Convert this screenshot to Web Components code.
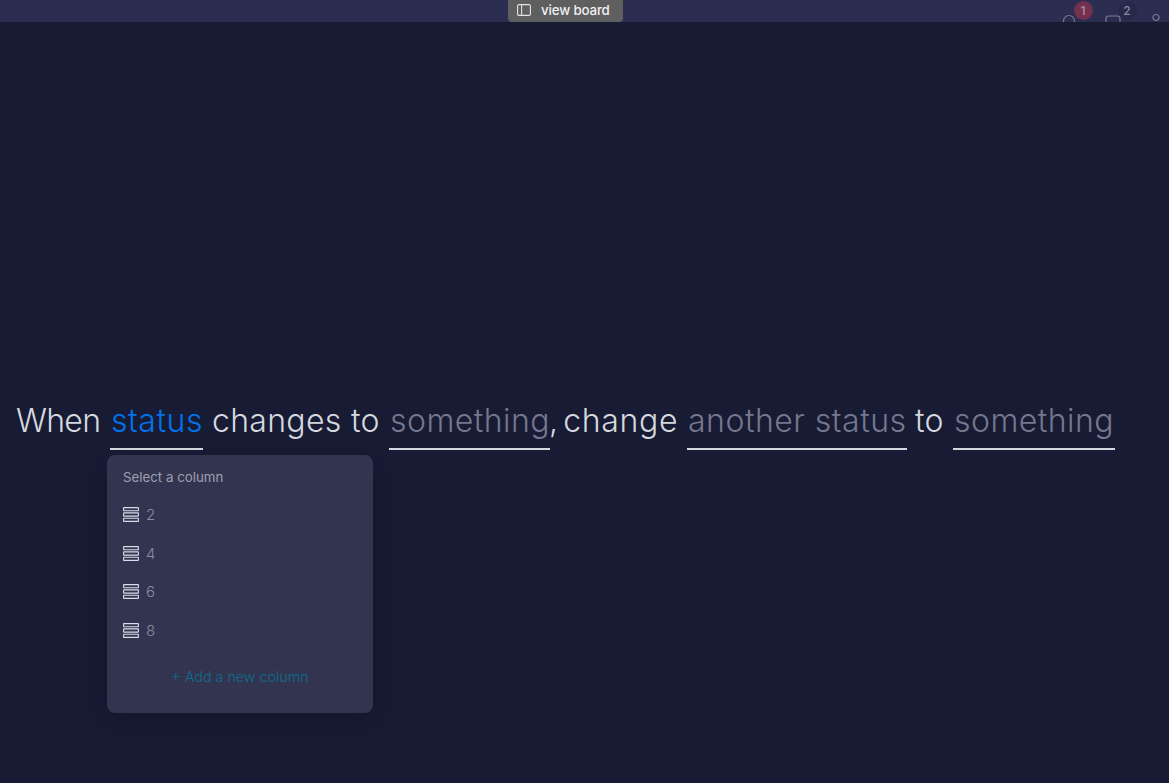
<!DOCTYPE html>
<html>
<head>
<meta charset="utf-8">
<title>Automation</title>
<style>
  html, body { margin: 0; height: 100%; background: #181b34; overflow: hidden; }
  body { font-family: "Inter", "Liberation Sans", sans-serif; display: flex; flex-direction: column; }
</style>
</head>
<body>
<top-bar>
  <bar-icon kind="bell" count="1" tone="#74304f" ink="#b08c9f"></bar-icon>
  <bar-icon kind="inbox" count="2" tone="#26294a" ink="#83869f"></bar-icon>
  <bar-icon kind="person"></bar-icon>
</top-bar>
<rule-sentence>
  <rule-word style="--w:85px;--ls:-.7px;margin-left:-1px">When</rule-word>
  <rule-slot style="--w:93px;--ls:.55px" tone="#0073ea" open>status
    <column-menu slot="menu" heading="Select a column" action="+ Add a new column">
      <column-item>2</column-item>
      <column-item>4</column-item>
      <column-item>6</column-item>
      <column-item>8</column-item>
    </column-menu>
  </rule-slot>
  <rule-word style="--w:168px;--ls:.3px">changes to</rule-word>
  <rule-slot style="--w:161px;--ls:.45px">something</rule-slot>
  <rule-word style="--w:129px;margin-left:-10px;--ws:-5px;--ls:.65px">, change</rule-word>
  <rule-slot style="--w:220px;--ls:.5px">another status</rule-slot>
  <rule-word style="--w:29px;margin-left:-1px">to</rule-word>
  <rule-slot style="--w:162px;--ls:.45px">something</rule-slot>
</rule-sentence>

<script>
class TopBar extends HTMLElement {
  constructor() {
    super();
    this.shadowDOM = this.attachShadow({ mode: "open" });
  }
  connectedCallback() {
    this.shadowDOM.innerHTML = `
    <style>
      :host { display: grid; grid-template-columns: 508px 115px 1fr; height: 22px; background: #2b2e50; flex: none; overflow: hidden; }
      .tab {
        display: flex; align-items: center; gap: 10px; padding: 0 0 3px 9px; box-sizing: border-box;
        background: #5f5f5f; border-radius: 0 0 4px 4px; color: #f0f0f2;
        font: 500 13.3px "Inter", "Liberation Sans", sans-serif; letter-spacing: -.15px;
      }
      svg { display: block; }
      .icons { display: flex; justify-content: flex-end; }
    </style>
    <div></div>
    <div class="tab">
      <svg width="14" height="12" viewBox="0 0 14 12" fill="none" stroke="#e4e4e8" stroke-width="1.1">
        <rect x=".6" y=".6" width="12.8" height="10.8" rx="1.4"/><path d="M4.6 .6v10.8"/>
      </svg>
      <span>view board</span>
    </div>
    <div class="icons"><slot></slot></div>`;
  }
}

class BarIcon extends HTMLElement {
  constructor() {
    super();
    this.shadowDOM = this.attachShadow({ mode: "open" });
  }
  connectedCallback() {
    const kind = this.getAttribute("kind");
    const count = this.getAttribute("count");
    const glyphs = {
      bell: `<path d="M2.5 12V7a5.5 5.5 0 0 1 11 0v5"/>`,
      inbox: `<path d="M1 12V5.5A2.5 2.5 0 0 1 3.5 3h9A2.5 2.5 0 0 1 15 5.5V12"/>`,
      person: `<circle cx="8" cy="4.5" r="3"/>`,
    };
    const widths = { bell: 44, inbox: 44, person: 20 };
    const spots = { bell: "left: 0; top: 13.5px", inbox: "left: 0; top: 13px", person: "left: -1px; top: 12.5px" };
    this.shadowDOM.innerHTML = `
    <style>
      :host { display: block; position: relative; width: ${widths[kind]}px; height: 22px; }
      svg { position: absolute; ${spots[kind]}; }
      .badge {
        position: absolute; left: 12.5px; top: 1px; width: 19px; height: 19px; border-radius: 50%;
        background: ${this.getAttribute("tone")}; color: ${this.getAttribute("ink")}; text-align: center;
        font: 500 12px/19px "Inter", "Liberation Sans", sans-serif;
      }
    </style>
    <svg width="16" height="14" viewBox="0 0 16 14" fill="none" stroke="#787a95" stroke-width="1.2">${glyphs[kind]}</svg>
    ${count ? `<span class="badge">${count}</span>` : ""}`;
  }
}

class RuleSentence extends HTMLElement {
  constructor() {
    super();
    this.attachShadow({ mode: "open" }).innerHTML = `
    <style>
      :host {
        display: flex; align-items: flex-start; gap: 9px; box-sizing: border-box;
        padding: 376px 0 0 17px; flex: 1;
        font: 300 32px/46px "Inter", "Liberation Sans", sans-serif; color: #d5d8df;
      }
    </style>
    <slot></slot>`;
  }
}

class RuleWord extends HTMLElement {
  constructor() {
    super();
    this.attachShadow({ mode: "open" }).innerHTML = `
    <style>
      :host { display: block; width: var(--w); white-space: nowrap; flex: none; font-weight: 350; letter-spacing: var(--ls, .25px); word-spacing: var(--ws, 0); }
    </style>
    <slot></slot>`;
  }
}

class RuleSlot extends HTMLElement {
  constructor() {
    super();
    const tone = this.getAttribute("tone") || "#74778d";
    this.attachShadow({ mode: "open" }).innerHTML = `
    <style>
      :host { display: block; position: relative; width: var(--w); flex: none; white-space: nowrap; font-weight: 280; letter-spacing: var(--ls, .55px); }
      .text { display: block; height: 52px; box-sizing: border-box; border-bottom: 2px solid #d5d8df; color: ${tone}; padding-left: 1px; }
      ::slotted([slot="menu"]) { position: absolute; left: -3px; top: 57px; letter-spacing: normal; }
    </style>
    <span class="text"><slot></slot></span>
    <slot name="menu"></slot>`;
  }
}

class ColumnMenu extends HTMLElement {
  constructor() {
    super();
    this.shadowDOM = this.attachShadow({ mode: "open" });
  }
  connectedCallback() {
    this.shadowDOM.innerHTML = `
    <style>
      :host {
        display: flex; flex-direction: column; width: 266px; height: 258px; box-sizing: border-box;
        padding: 14px 16px 0; background: #33344f; border-radius: 8px;
        box-shadow: 0 6px 20px rgba(0, 0, 0, .18);
        font: 400 13.3px/17px "Inter", "Liberation Sans", sans-serif; color: #9ea0b2;
      }
      .head { height: 26.3px; }
      .list { display: flex; flex-direction: column; }
      .add { margin-top: 17.7px; text-align: center; color: #0b6f8f; font-weight: 300; font-size: 14.3px; line-height: 20px; }
    </style>
    <div class="head">${this.getAttribute("heading")}</div>
    <div class="list"><slot></slot></div>
    <div class="add">${this.getAttribute("action")}</div>`;
  }
}

class ColumnItem extends HTMLElement {
  constructor() {
    super();
    this.attachShadow({ mode: "open" }).innerHTML = `
    <style>
      :host { display: flex; align-items: center; gap: 7px; height: 38.6px; color: #8a8ca2; font-size: 15px; font-weight: 300; }
      svg { display: block; flex: none; }
    </style>
    <svg width="16" height="15" viewBox="0 0 16 15" fill="none" stroke="#d9dce8" stroke-width="1.1">
      <rect x=".6" y=".6" width="14.8" height="3.2" rx=".3"/>
      <rect x=".6" y="5.9" width="14.8" height="3.2" rx=".3"/>
      <rect x=".6" y="11.2" width="14.8" height="3.2" rx=".3"/>
    </svg>
    <slot></slot>`;
  }
}

customElements.define("top-bar", TopBar);
customElements.define("bar-icon", BarIcon);
customElements.define("rule-sentence", RuleSentence);
customElements.define("rule-word", RuleWord);
customElements.define("rule-slot", RuleSlot);
customElements.define("column-menu", ColumnMenu);
customElements.define("column-item", ColumnItem);
</script>
</body>
</html>
